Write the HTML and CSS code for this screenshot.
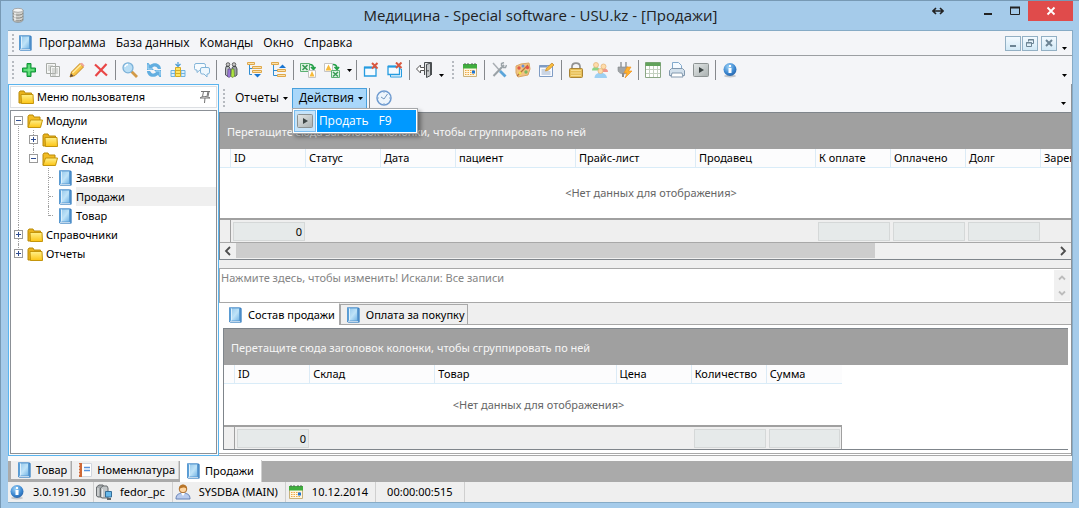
FILE: index.html
```html
<!DOCTYPE html>
<html lang="ru">
<head>
<meta charset="utf-8">
<title>Медицина - Special software - USU.kz - [Продажи]</title>
<link rel="stylesheet" href="styles.css">
</head>
<body>
<svg class="defs" aria-hidden="true">
  <defs>
    <linearGradient id="g-blue" x1="0" y1="0" x2="1" y2="1"><stop offset="0" stop-color="#8fc4ea"/><stop offset=".55" stop-color="#bfe3f8"/><stop offset="1" stop-color="#6fb2e4"/></linearGradient>
    <linearGradient id="g-yellow" x1="0" y1="0" x2="0" y2="1"><stop offset="0" stop-color="#fff08a"/><stop offset="1" stop-color="#fcc414"/></linearGradient>
    <linearGradient id="g-grey" x1="0" y1="0" x2="1" y2="1"><stop offset="0" stop-color="#e4e8e8"/><stop offset="1" stop-color="#a9b0b0"/></linearGradient>
    <radialGradient id="g-ball" cx=".4" cy=".3" r=".8"><stop offset="0" stop-color="#9ed4f8"/><stop offset=".6" stop-color="#3a86d0"/><stop offset="1" stop-color="#245a9c"/></radialGradient>
  </defs>
  <symbol id="db" viewBox="0 0 16 16"><path d="M3 3v10c0 3 10 3 10 0V3z" fill="#d4d4d0" stroke="#858580" stroke-width=".8"/><ellipse cx="8" cy="3.3" rx="5" ry="2" fill="#f6f6f4" stroke="#999"  stroke-width=".8"/><path d="M3 6.2c1 2.5 9 2.5 10 0M3 9.2c1 2.5 9 2.5 10 0M3 12c1 2.5 9 2.5 10 0" fill="none" stroke="#84847f"/><path d="M5 6v8" stroke="#fff"/></symbol>
  <symbol id="book" viewBox="0 0 16 16"><path d="M2 .500h11.500l1 1v14H3l-1-1z" fill="#3a7ebf"/><path d="M2.500 1h10v13h-10z" fill="url(#g-blue)" stroke="#5a9bd2"/><path d="M3.500 1.500v12" stroke="#5b9fd8"/><path d="M4.500 1.500v12" stroke="#def1fd"/><path d="M3.500 15h10.500V2" fill="none" stroke="#5f9bd0"/><path d="M3 14.500h10" stroke="#dceaf5" stroke-width=".8"/></symbol>
  <symbol id="folder" viewBox="0 0 16 16"><path d="M1 3.500L2 2h4l1 2h6.500v10H1z" fill="#e9b21c" stroke="#b98a08"/><path d="M3.500 14.500l-.500-9h12l.500 9z" fill="url(#g-yellow)" stroke="#c4950c"/></symbol>
  <symbol id="folder-open" viewBox="0 0 16 16"><path d="M1 3.500L2 2h4l1 2h6v10H1z" fill="#f3bd25" stroke="#b98a08"/><path d="M1 14.500L3.500 7H15.500L13.500 14.500z" fill="url(#g-yellow)" stroke="#c4950c"/></symbol>
  <symbol id="pin" viewBox="0 0 12 14"><path d="M2 1.500h9M4.500 1.500l-1 5M9 1.500l-1 5M10 1.500l-1 5M1 8c2-2 7-2 10 0zM6 8l-.500 5" fill="none" stroke="#747474"/></symbol>
  <symbol id="add" viewBox="0 0 16 16"><path d="M6 1.500h4V6h4.500v4H10v4.500H6V10H1.500V6H6z" fill="#39c85a" stroke="#129238"/><path d="M8 3v10M3 8h10" stroke="#89ee98"/></symbol>
  <symbol id="copy" viewBox="0 0 16 16"><path d="M1.500 1.500h9v10h-9zM5.500 4.500h9v10h-9z" fill="#f5f6f5" stroke="#a7aba6"/><path d="M3 4h5M3 6h2M3 8h2M7 7h6M7 9h6M7 11h6M7 13h4" stroke="#b6bab5"/></symbol>
  <symbol id="pencil" viewBox="0 0 16 16"><path d="M1 15l1.500-5L11 1.500 14.500 5 6 13.500z" fill="#f8c446" stroke="#c58a22"/><path d="M3.500 11L12 2.800" stroke="#ffeaa0" stroke-width="1.500"/><path d="M11 1.500L14.500 5l1-1.500-2.500-2.800z" fill="#f0a399"/><path d="M1 15l1-3.500 2.500 2.500z" fill="#604b3e"/></symbol>
  <symbol id="delete" viewBox="0 0 16 16"><path d="M2 2.500l12 11M13.500 2L2.500 14" stroke="#e94646" stroke-width="2.200"/></symbol>
  <symbol id="search" viewBox="0 0 16 16"><path d="M9.500 9.500l5.500 5.500" stroke="#d29a48" stroke-width="2.800"/><circle cx="6" cy="5.800" r="5" fill="#b9def5" stroke="#7bb1d8" stroke-width="1.300"/><path d="M3 5c0-2 2-2.500 3-2.500" stroke="#fff" fill="none" stroke-width="1.300"/></symbol>
  <symbol id="refresh" viewBox="0 0 16 16"><path d="M1 1v7h7L6 6c1-1.500 3-2 4.500-1L12 7h3C15 2 9-1 4 3L2.500 1z" fill="#62aee0"/><path d="M15 15V8H8l2 2c-1 1.500-3 2-4.500 1L4 9H1c0 5 6 8 11 4l1.500 2z" fill="#62aee0"/><path d="M2 2.500V7h4M14 13.500V9h-4" fill="none" stroke="#a9d8f5"/></symbol>
  <symbol id="sort" viewBox="0 0 16 16"><path d="M1 8.500h4v6H1zM11 8.500h4v6h-4z" fill="#dceffb" stroke="#6eb3e0"/><path d="M1 11.500h14" stroke="#6eb3e0"/><path d="M5.500 5.500h5v9h-5z" fill="#ffe562" stroke="#d6ab25"/><path d="M6 8.500h4M6 11.500h4" stroke="#d6ab25"/><path d="M8 0v4M5.500 2L8 4.500 10.500 2" fill="none" stroke="#489bd5" stroke-width="1.200"/></symbol>
  <symbol id="chat" viewBox="0 0 16 16"><path d="M2 1.500h8q1.500 0 1.500 2v3q0 1.500-1.500 1.500H6L3 10.500V8H2Q.500 8 .500 6.500v-3q0-2 1.500-2z" fill="#f7fbfe" stroke="#82b4d8"/><path d="M8 5.500h6q1.500 0 1.500 1.500v3q0 2-1.500 2h-1v3l-3-3H8q-1.500 0-1.500-2V7q0-1.500 1.500-1.500z" fill="#eef7fd" stroke="#82b4d8"/></symbol>
  <symbol id="people" viewBox="0 0 16 16"><circle cx="5" cy="2.500" r="1.800" fill="#c9c9c9" stroke="#444" stroke-width=".8"/><circle cx="11" cy="2.500" r="1.800" fill="#c9c9c9" stroke="#444" stroke-width=".8"/><path d="M3 4.500h3l1 2v6L5 14.500 2.500 13V7z" fill="#b8bcc0" stroke="#34373a" stroke-width=".8"/><path d="M10 4.500h3l1 2.500v6l-2 1.500L9 12V6z" fill="#9a9ea2" stroke="#34373a" stroke-width=".8"/><path d="M5 7h2.500v7.500L6 15.500l-1.500-1z" fill="#9c78d8" stroke="#4c4070" stroke-width=".6"/><path d="M8.500 7H11l.500 7-1.500 1.500-2-1z" fill="#aee641" stroke="#55752a" stroke-width=".6"/></symbol>
  <symbol id="tree-down" viewBox="0 0 16 16"><path d="M2.500 3v9.500H5M2.500 6.500H6" fill="none" stroke="#318ed2"/><path d="M.500.500h7v2h-7zM5.500 4.500h9v2h-9zM5.500 8.500h9v2h-9z" fill="#fbe2ae" stroke="#dfa84b"/><path d="M7 12h7l-3.500 3.500z" fill="#1976d2"/></symbol>
  <symbol id="tree-up" viewBox="0 0 16 16"><path d="M2.500 3v10.500H6M2.500 8.500H6" fill="none" stroke="#318ed2"/><path d="M.500.500h7v2h-7zM6.500 7.500h8v2h-8zM6.500 12.500h8v2h-8z" fill="#fbe2ae" stroke="#dfa84b"/><path d="M8 6h7l-3.500-3.500z" fill="#1976d2"/></symbol>
  <symbol id="xls-out" viewBox="0 0 16 16"><path d="M.500 1.500h9v8h-9z" fill="#e0f3e4" stroke="#5bb072"/><path d="M2.500 3l5 5M7.500 3l-5 5" stroke="#3a9a55" stroke-width="1.600"/><path d="M10 2.500c3 0 3.500 2 3.500 4M11 5l2.500 2.500L15.500 5" fill="none" stroke="#23a048" stroke-width="1.700"/><path d="M8.500 8.500h7v7h-7z" fill="#fff" stroke="#c4c4c4"/><path d="M9.500 14.500l2.500-5.500 2.500 5.500z" fill="#f7bb3b"/></symbol>
  <symbol id="xls-in" viewBox="0 0 16 16"><path d="M.500 1.500h8v8h-8z" fill="#fff" stroke="#c4c4c4"/><path d="M1.500 8.500l3-6 3 6z" fill="#f7bb3b"/><path d="M9 2.500c3 0 4 2 4 4M10.500 5l2.500 2.500L15 5" fill="none" stroke="#23a048" stroke-width="1.700"/><path d="M7.500 8.500h8v7h-8z" fill="#e0f3e4" stroke="#5bb072"/><path d="M9 10l5 4.500M14 10l-5 4.500" stroke="#3a9a55" stroke-width="1.500"/></symbol>
  <symbol id="win-close" viewBox="0 0 16 16"><path d="M1.500 5.500h11.500v8.500H1.500z" fill="#f6fbff" stroke="#269ce0" stroke-width="1.300"/><path d="M1 5.500h8" stroke="#269ce0" stroke-width="2"/><path d="M9 1l5.500 5.500M14.500 1L9 6.500" stroke="#d9573f" stroke-width="2"/></symbol>
  <symbol id="wins-close" viewBox="0 0 16 16"><path d="M3.500 7h11v8h-11z" fill="#f6fbff" stroke="#269ce0"/><path d="M1 4.500h11.500v8H1z" fill="#f6fbff" stroke="#269ce0" stroke-width="1.300"/><path d="M1 4.500h8" stroke="#269ce0" stroke-width="2"/><path d="M9 .500L14.500 6M14.500.500L9 6" stroke="#d9573f" stroke-width="2"/></symbol>
  <symbol id="exit" viewBox="0 0 16 16"><path d="M8.500 13V.500h7V13" fill="#e3e4e5" stroke="#4b4f52"/><path d="M10.500 2.500l4-1.500v12.500l-4 2z" fill="#c3c6c8" stroke="#4b4f52"/><path d="M.500 7L4.500 3v2.500h4v3h-4V11z" fill="#fff" stroke="#555"/><path d="M12 8v1.500" stroke="#222"/></symbol>
  <symbol id="calendar" viewBox="0 0 16 16"><path d="M1.500 2.500h13v12h-13z" fill="#fff6df" stroke="#c9b27c"/><path d="M1 2h14v4.500H1z" fill="#3fae3d"/><path d="M3 1v2M6 1v2M10 1v2M13 1v2" stroke="#4f6655"/><path d="M3 8.500h10M3 10.500h10M3 12.500h10" stroke="#eda947" stroke-dasharray="1.500 1"/><path d="M10 8.500h3v3h-3z" fill="#1d74d3"/></symbol>
  <symbol id="tools" viewBox="0 0 16 16"><path d="M2 1l8 9" stroke="#a9aeb3" stroke-width="1.500"/><path d="M9 9l5.500 5.500" stroke="#5ba5da" stroke-width="2.800"/><path d="M13 3L2.500 14" stroke="#9aa2a7" stroke-width="2"/><path d="M10.500 4V1.500L13 .500M12 5.500h2.500L15.500 3" fill="none" stroke="#9aa2a7" stroke-width="1.400"/></symbol>
  <symbol id="palette" viewBox="0 0 16 16"><path d="M1 4l5-2 8-1 1 6-2 6-10 2-2-4z" fill="#f2c284" stroke="#dba765"/><path d="M2 14L13 3" stroke="#b8763a" stroke-width="1.300"/><circle cx="4" cy="6" r="1.700" fill="#e05c48"/><circle cx="8" cy="4" r="1.500" fill="#6c90d2"/><circle cx="12.500" cy="5.500" r="1.700" fill="#e4534a"/><circle cx="11" cy="10" r="1.700" fill="#7ab861"/><circle cx="5" cy="11" r="1.500" fill="#eee14b"/></symbol>
  <symbol id="edit" viewBox="0 0 16 16"><path d="M.500 3.500h13v11H.500z" fill="#f8faff" stroke="#7f9cc4"/><path d="M.500 4.500h8" stroke="#7f9cc4" stroke-width="2"/><path d="M2.500 8h4M2.500 10h9M2.500 12h9" stroke="#9db1cc"/><path d="M6.500 9l1-3L13 1l2 2-5.500 5z" fill="#f9bd3e" stroke="#c48c35" stroke-width=".8"/></symbol>
  <symbol id="lock" viewBox="0 0 16 16"><path d="M4 7V4.500c0-4.500 8-4.500 8 0V7" fill="none" stroke="#929292" stroke-width="1.700"/><rect x="1.500" y="6.500" width="13" height="9" rx="1" fill="#e7bf59" stroke="#aa8436"/><path d="M3 8.500h10M3 11h10M3 13.500h10" stroke="#f6dc91"/></symbol>
  <symbol id="users" viewBox="0 0 16 16"><path d="M0 8.500c0-5 7.500-5 7.500 0z" fill="#8fd487"/><circle cx="4" cy="3" r="2.500" fill="#ffdcaa" stroke="#e5b87c" stroke-width=".8"/><path d="M8 10c0-5 8-5 8 0z" fill="#f0968c"/><circle cx="11.500" cy="4.500" r="2.500" fill="#ffdcaa" stroke="#e5b87c" stroke-width=".8"/><path d="M2.500 16c0-7 12-7 12.500 0z" fill="#9dd0f3"/><circle cx="8.500" cy="9" r="2.500" fill="#ffdcaa" stroke="#e5b87c" stroke-width=".8"/></symbol>
  <symbol id="plug" viewBox="0 0 16 16"><path d="M5 0v5M10 0v5" stroke="#9b9fa2" stroke-width="1.600"/><path d="M2 5h10v3c0 3-2 4-4 4s-6-1-6-4z" fill="#a0a4a7" stroke="#84888b" stroke-width=".6"/><path d="M7 11v4" stroke="#8b8b8b" stroke-width="2"/><path d="M11 5l4 0-2.500 4H16l-7 7 2-5H8z" fill="#ffb22e" stroke="#ee8b12" stroke-width=".6"/></symbol>
  <symbol id="table" viewBox="0 0 16 16"><path d="M.500.500h15v15H.500z" fill="#fff" stroke="#8aa684"/><path d="M.500.500h15V4H.500z" fill="#62a35c"/><path d="M1 7.500h14M1 11.500h14M4.500 4v11M8.500 4v11M12.500 4v11" stroke="#c3d0c0"/></symbol>
  <symbol id="printer" viewBox="0 0 16 16"><path d="M3.500 8V.500h6l3 3V8z" fill="#f5faff" stroke="#82a9cc"/><path d="M.500 8.500l2-2h11l2 2v5H.500z" fill="#d2e0ec" stroke="#8298ae"/><path d="M3 11h10l1 4H2z" fill="#fff" stroke="#8399ae"/></symbol>
  <symbol id="play" viewBox="0 0 16 16"><rect x=".5" y="1.500" width="15" height="13" rx="1" fill="url(#g-grey)" stroke="#8c9292"/><path d="M6 5v6l5-3z" fill="#3e4646"/></symbol>
  <symbol id="info" viewBox="0 0 16 16"><ellipse cx="8" cy="14" rx="6" ry="1.500" fill="#c4c8cc"/><circle cx="8" cy="7.500" r="6.500" fill="url(#g-ball)"/><path d="M7 3h2v2H7zM6.500 6H9.500v5h-3z" fill="#fff"/></symbol>
  <symbol id="clock" viewBox="0 0 16 16"><circle cx="8" cy="8" r="7" fill="#edf5fc" stroke="#6f9bd0" stroke-width="1.500"/><path d="M5 7l3 2 3.500-5" fill="none" stroke="#7196bd"/><path d="M8 2v1M8 13v1M2 8h1M13 8h1" stroke="#88aaca"/></symbol>
  <symbol id="note" viewBox="0 0 16 16"><path d="M2.500 1.500h12v13h-12z" fill="#fff" stroke="#d1d6de"/><path d="M2 1h3v14H2z" fill="#ce6937"/><path d="M1 3h2M1 6h2M1 9h2M1 12h2" stroke="#fff"/><path d="M7 5.500h6M7 8.500h6" stroke="#5994dc" stroke-width="1.600"/></symbol>
  <symbol id="server" viewBox="0 0 16 16"><path d="M.500 3L3 1h4l1 2v10H2l-1.500-1z" fill="#a4a9ab" stroke="#686c6f"/><path d="M4.500 4L7 2h4l1 2v10H6l-1.500-1z" fill="#c2c6c8" stroke="#686c6f"/><path d="M2 4v8M6.500 5v8" stroke="#eee"/><path d="M9.500 7.500h6V13h-6z" fill="#68b9ea" stroke="#356e98"/><path d="M11 15h4" stroke="#62686b" stroke-width="2"/></symbol>
  <symbol id="person" viewBox="0 0 16 16"><path d="M1 15c0-5 3-5 5-6h4c2 1 5 1 5 6z" fill="#b9cbed" stroke="#6581b5"/><circle cx="8" cy="5" r="3.800" fill="#ffd6a2" stroke="#a86a2b"/><path d="M4 5c0-6 8-6 8 0-2-2-5-2-8 0z" fill="#b87529"/><path d="M6 9l2 3 2-3z" fill="#fff"/></symbol>
  <symbol id="left" viewBox="0 0 8 10"><path d="M6 1L2 5l4 4" fill="none" stroke="#4d4d4d" stroke-width="1.800"/></symbol>
  <symbol id="right" viewBox="0 0 8 10"><path d="M2 1l4 4-4 4" fill="none" stroke="#4d4d4d" stroke-width="1.800"/></symbol>
  <symbol id="up" viewBox="0 0 10 8"><path d="M2 5.500l3-3 3 3" fill="none" stroke="#bcbcbc" stroke-width="1.800"/></symbol>
  <symbol id="down" viewBox="0 0 10 8"><path d="M2 2.500l3 3 3-3" fill="none" stroke="#bcbcbc" stroke-width="1.800"/></symbol>
  <symbol id="caret" viewBox="0 0 5 3"><path d="M0 0h5L2.500 3z" fill="#000"/></symbol>
  <symbol id="resize" viewBox="0 0 12 8"><path d="M1 4h10M4 1L1 4l3 3M8 1l3 3-3 3" fill="none" stroke="#222" stroke-width="1.600"/></symbol>
  <symbol id="w-min" viewBox="0 0 10 10"><path d="M1 8h8" stroke="#222" stroke-width="2"/></symbol>
  <symbol id="w-max" viewBox="0 0 10 10"><path d="M.500 1.500h9v7h-9z" fill="none" stroke="#222"/><path d="M0 1.500h10" stroke="#222" stroke-width="2"/></symbol>
  <symbol id="w-close" viewBox="0 0 10 10"><path d="M1.500 1.500l7 7M8.500 1.500l-7 7" stroke="#fff" stroke-width="1.800"/></symbol>
  <symbol id="m-min" viewBox="0 0 10 10"><path d="M2 8h6" stroke="#6c8494" stroke-width="2"/></symbol>
  <symbol id="m-restore" viewBox="0 0 10 10"><path d="M3.500 3.500v-2h5v4h-2M1.500 4.500h5v4h-5zM1 5h6M3 2h6" fill="none" stroke="#6c8494"/></symbol>
  <symbol id="m-close" viewBox="0 0 10 10"><path d="M2 2l6 6M8 2L2 8" stroke="#6c8494" stroke-width="2"/></symbol>
</svg>

<div class="window">
  <header class="titlebar">
    <svg class="icon app-icon"><use href="#db"/></svg>
    <h1 class="title">Медицина - Special software - USU.kz - [Продажи]</h1>
    <div class="window-buttons">
      <button class="wb wb-resize" aria-label="Размер"><svg><use href="#resize"/></svg></button>
      <button class="wb" aria-label="Свернуть"><svg><use href="#w-min"/></svg></button>
      <button class="wb" aria-label="Развернуть"><svg><use href="#w-max"/></svg></button>
      <button class="wb wb-close" aria-label="Закрыть"><svg><use href="#w-close"/></svg></button>
    </div>
  </header>

  <div class="frame">
    <nav class="menubar">
      <span class="grip"></span>
      <svg class="icon menu-icon"><use href="#book"/></svg>
      <button class="menu">Программа</button><button class="menu">База данных</button><button class="menu">Команды</button><button class="menu">Окно</button><button class="menu">Справка</button>
      <div class="mdi">
        <button aria-label="Свернуть окно"><svg><use href="#m-min"/></svg></button>
        <button aria-label="Восстановить окно"><svg><use href="#m-restore"/></svg></button>
        <button class="mdi-close" aria-label="Закрыть окно"><svg><use href="#m-close"/></svg></button>
      </div>
      <button class="more" aria-label="Ещё"><svg><use href="#caret"/></svg></button>
    </nav>

    <div class="toolbar">
      <span class="grip"></span>
      <button class="tool" aria-label="Добавить"><svg class="icon"><use href="#add"/></svg></button>
      <button class="tool" aria-label="Копировать"><svg class="icon"><use href="#copy"/></svg></button>
      <button class="tool" aria-label="Изменить"><svg class="icon"><use href="#pencil"/></svg></button>
      <button class="tool" aria-label="Удалить"><svg class="icon"><use href="#delete"/></svg></button>
      <span class="sep"></span>
      <button class="tool" aria-label="Поиск"><svg class="icon"><use href="#search"/></svg></button>
      <button class="tool" aria-label="Обновить"><svg class="icon"><use href="#refresh"/></svg></button>
      <button class="tool" aria-label="Ширина колонок"><svg class="icon"><use href="#sort"/></svg></button>
      <button class="tool" aria-label="Примечания"><svg class="icon"><use href="#chat"/></svg></button>
      <span class="sep"></span>
      <button class="tool" aria-label="Группы"><svg class="icon"><use href="#people"/></svg></button>
      <button class="tool" aria-label="Развернуть все"><svg class="icon"><use href="#tree-down"/></svg></button>
      <button class="tool" aria-label="Свернуть все"><svg class="icon"><use href="#tree-up"/></svg></button>
      <span class="sep"></span>
      <button class="tool" aria-label="Экспорт"><svg class="icon"><use href="#xls-out"/></svg></button>
      <button class="tool" aria-label="Импорт"><svg class="icon"><use href="#xls-in"/></svg></button>
      <button class="drop" aria-label="Варианты импорта"><svg><use href="#caret"/></svg></button>
      <span class="sep"></span>
      <button class="tool" aria-label="Закрыть окно"><svg class="icon"><use href="#win-close"/></svg></button>
      <button class="tool" aria-label="Закрыть все окна"><svg class="icon"><use href="#wins-close"/></svg></button>
      <span class="sep"></span>
      <button class="tool" aria-label="Выход"><svg class="icon"><use href="#exit"/></svg></button>
      <button class="drop drop-low" aria-label="Ещё кнопки"><svg><use href="#caret"/></svg></button>
      <span class="grip grip-mid"></span>
      <button class="tool" aria-label="Календарь"><svg class="icon"><use href="#calendar"/></svg></button>
      <span class="sep"></span>
      <button class="tool" aria-label="Настройки"><svg class="icon"><use href="#tools"/></svg></button>
      <button class="tool" aria-label="Оформление"><svg class="icon"><use href="#palette"/></svg></button>
      <button class="tool" aria-label="Правка"><svg class="icon"><use href="#edit"/></svg></button>
      <span class="sep"></span>
      <button class="tool" aria-label="Блокировка"><svg class="icon"><use href="#lock"/></svg></button>
      <button class="tool" aria-label="Пользователи"><svg class="icon"><use href="#users"/></svg></button>
      <button class="tool" aria-label="Подключение"><svg class="icon"><use href="#plug"/></svg></button>
      <span class="sep"></span>
      <button class="tool" aria-label="Таблица"><svg class="icon"><use href="#table"/></svg></button>
      <button class="tool" aria-label="Печать"><svg class="icon"><use href="#printer"/></svg></button>
      <button class="tool" aria-label="Выполнить"><svg class="icon"><use href="#play"/></svg></button>
      <span class="sep"></span>
      <button class="tool" aria-label="Информация"><svg class="icon"><use href="#info"/></svg></button>
      <button class="more" aria-label="Ещё"><svg><use href="#caret"/></svg></button>
    </div>

    <div class="workspace">
      <aside class="sidebar">
        <div class="side-head">
          <svg class="icon"><use href="#folder"/></svg>
          <span>Меню пользователя</span>
          <button class="pin" aria-label="Закрепить"><svg><use href="#pin"/></svg></button>
        </div>
        <ul class="tree">
          <li>
            <div class="node"><span class="box minus"></span><svg class="icon"><use href="#folder-open"/></svg><span class="label">Модули</span></div>
            <ul>
              <li><div class="node"><span class="box plus"></span><svg class="icon"><use href="#folder"/></svg><span class="label">Клиенты</span></div></li>
              <li>
                <div class="node"><span class="box minus"></span><svg class="icon"><use href="#folder-open"/></svg><span class="label">Склад</span></div>
                <ul>
                  <li><div class="node"><span class="twig"></span><svg class="icon"><use href="#book"/></svg><span class="label">Заявки</span></div></li>
                  <li><div class="node"><span class="twig"></span><svg class="icon"><use href="#book"/></svg><span class="label selected">Продажи</span></div></li>
                  <li><div class="node"><span class="twig"></span><svg class="icon"><use href="#book"/></svg><span class="label">Товар</span></div></li>
                </ul>
              </li>
            </ul>
          </li>
          <li><div class="node"><span class="box plus"></span><svg class="icon"><use href="#folder"/></svg><span class="label">Справочники</span></div></li>
          <li><div class="node"><span class="box plus"></span><svg class="icon"><use href="#folder"/></svg><span class="label">Отчеты</span></div></li>
        </ul>
      </aside>

      <main class="content">
        <div class="actions">
          <span class="grip"></span>
          <button class="action">Отчеты<svg class="caret"><use href="#caret"/></svg></button>
          <div class="action-wrap">
            <button class="action open">Действия<svg class="caret"><use href="#caret"/></svg></button>
            <div class="popup">
              <span class="popup-icon"><svg class="icon"><use href="#play"/></svg></span>
              <button class="popup-item"><span>Продать</span><span>F9</span></button>
            </div>
          </div>
          <span class="sep"></span>
          <button class="tool" aria-label="Время"><svg class="icon"><use href="#clock"/></svg></button>
          <button class="more" aria-label="Ещё"><svg><use href="#caret"/></svg></button>
        </div>

        <section class="grid">
          <div class="group-hint">Перетащите сюда заголовок колонки, чтобы сгруппировать по ней</div>
          <div class="clip">
            <table class="sales">
              <colgroup><col class="c-mark"><col class="c-s"><col class="c-s"><col class="c-s"><col class="c-m"><col class="c-m"><col class="c-m"><col class="c-s"><col class="c-s"><col class="c-s"><col></colgroup>
              <thead><tr><th></th><th>ID</th><th>Статус</th><th>Дата</th><th>пациент</th><th>Прайс-лист</th><th>Продавец</th><th>К оплате</th><th>Оплачено</th><th>Долг</th><th>Зарег</th></tr></thead>
              <tbody><tr><td></td><td class="empty" colspan="10">&lt;Нет данных для отображения&gt;</td></tr></tbody>
              <tfoot><tr><td class="mark"></td><td><output>0</output></td><td colspan="5"></td><td><output></output></td><td><output></output></td><td><output></output></td><td></td></tr></tfoot>
            </table>
          </div>
          <div class="hscroll">
            <button aria-label="Влево"><svg><use href="#left"/></svg></button>
            <div class="track"><div class="thumb"></div></div>
            <button aria-label="Вправо"><svg><use href="#right"/></svg></button>
          </div>
        </section>

        <div class="memo">
          <textarea aria-label="Условия поиска" rows="1">Нажмите здесь, чтобы изменить! Искали: Все записи</textarea>
          <div class="vscroll">
            <button aria-label="Вверх"><svg><use href="#up"/></svg></button>
            <button aria-label="Вниз"><svg><use href="#down"/></svg></button>
          </div>
        </div>

        <div class="tabs">
          <button class="tab active"><svg class="icon"><use href="#book"/></svg>Состав продажи</button>
          <button class="tab"><svg class="icon"><use href="#book"/></svg>Оплата за покупку</button>
        </div>
        <div class="tab-page">
          <section class="grid detail">
            <div class="group-hint">Перетащите сюда заголовок колонки, чтобы сгруппировать по ней</div>
            <div class="clip">
              <table class="items">
                <colgroup><col class="c-mark"><col class="c-s"><col class="c-w"><col class="c-x"><col class="c-s"><col class="c-s"><col class="c-s"></colgroup>
                <thead><tr><th></th><th>ID</th><th>Склад</th><th>Товар</th><th>Цена</th><th>Количество</th><th>Сумма</th></tr></thead>
                <tbody><tr><td></td><td class="empty" colspan="6">&lt;Нет данных для отображения&gt;</td></tr></tbody>
                <tfoot><tr><td class="mark"></td><td><output>0</output></td><td colspan="3"></td><td><output></output></td><td><output></output></td></tr></tfoot>
              </table>
            </div>
          </section>
        </div>
      </main>
    </div>

    <div class="doc-tabs">
      <button class="doc"><svg class="icon"><use href="#book"/></svg>Товар</button>
      <button class="doc"><svg class="icon"><use href="#note"/></svg>Номенклатура</button>
      <button class="doc current"><svg class="icon"><use href="#book"/></svg>Продажи</button>
    </div>

    <footer class="status">
      <span class="cell"><svg class="icon"><use href="#info"/></svg>3.0.191.30</span>
      <span class="cell"><svg class="icon"><use href="#server"/></svg>fedor_pc</span>
      <span class="cell"><svg class="icon"><use href="#person"/></svg>SYSDBA (MAIN)</span>
      <span class="cell"><svg class="icon"><use href="#calendar"/></svg>10.12.2014</span>
      <span class="cell timer">00:00:00:515</span>
    </footer>
  </div>
</div>
</body>
</html>
```
FILE: styles.css
```css
* { box-sizing: border-box; }
body {
  margin: 0;
  background: #a5cbea;
  color: #000;
  font: 11px/14px "Noto Sans", "Open Sans", sans-serif;
}
button { margin: 0; padding: 0; border: 0; background: none; color: inherit; font: inherit; display: flex; align-items: center; justify-content: center; white-space: nowrap; }
ul { list-style: none; margin: 0; padding: 0; }
.defs { position: absolute; width: 0; height: 0; }
.icon { width: 16px; height: 16px; flex: none; }

.window { min-height: 100vh; display: flex; flex-direction: column; padding: 0 6px 5px 7px; border-top: 1px solid #7799b4; border-left: 1px solid #7799b4; background: #a5cbea; }

.titlebar { display: grid; grid-template-columns: 1fr auto 1fr; height: 29px; flex: none; }
.app-icon { margin: 6px 0 0 2px; }
.title { margin: 0; font: 15px/29px "Open Sans", "Noto Sans", sans-serif; color: #222; }
.window-buttons { display: flex; justify-content: flex-end; height: 20px; }
.wb { width: 27px; }
.wb svg { width: 10px; height: 10px; }
.wb-resize { margin-right: 23px; }
.wb-resize svg { width: 12px; height: 8px; }
.wb-close { width: 45px; background: #e04b4b; }

.frame { flex: 1; display: flex; flex-direction: column; border: 1px solid #86abc6; border-left: 0; background: #f4f5f8; }

.menubar { display: flex; align-items: center; height: 25px; flex: none; border-bottom: 1px solid #9b9fa3; font: 12px/16px "Open Sans", "Noto Sans", sans-serif; }
.grip { width: 2px; height: 18px; margin: 0 3px 0 4px; background: repeating-linear-gradient(#b6bac0 0 2px, transparent 2px 4px); flex: none; }
.menu-icon { margin-right: 1px; }
.menu { padding: 0 5px; height: 22px; }
.mdi { display: flex; gap: 1px; margin-left: auto; }
.mdi button { width: 16px; height: 15px; border: 1px solid #93b0c4; background: linear-gradient(#f3faff, #d2e9f6); }
.mdi svg { width: 10px; height: 10px; }
.mdi .mdi-close { margin-left: 2px; }
.more { width: 15px; height: 20px; align-items: flex-end; padding-bottom: 3px; }
.more svg, .drop svg, .caret { width: 5px; height: 3px; flex: none; }

.toolbar { display: flex; align-items: center; height: 28px; flex: none; }
.toolbar .more, .actions .more { margin-left: auto; }
.tool { width: 24px; height: 24px; flex: none; }
.sep { width: 1px; height: 20px; margin: 0 2px; background: #85888c; flex: none; }
.drop { width: 10px; height: 20px; }
.drop-low { align-items: flex-end; padding-bottom: 3px; }
.grip-mid { margin: 0 4px 0 6px; }

.workspace { flex: 1; display: flex; background: #efefef; }
.sidebar { width: 211px; flex: none; display: flex; flex-direction: column; gap: 2px; border: 1px solid #5ab4ee; padding: 1px; background: #fafbfc; }
.side-head { display: flex; align-items: center; gap: 3px; height: 22px; padding: 0 5px 0 7px; border: 1px solid #dcdfe3; background: #fff; }
.pin { margin-left: auto; }
.pin svg { width: 12px; height: 14px; }
.tree { flex: 1; background: #fff; border: 1px solid #8b9096; padding-left: 3px; }
.node { display: flex; align-items: center; height: 19px; }
.node .icon { margin-left: 4px; }
.label { flex: 1; line-height: 19px; margin-left: 3px; }
.selected { background: #efefef; }
.tree ul { padding-left: 15px; }
.tree li { position: relative; }
.box { width: 9px; height: 9px; border: 1px solid #9a9a9a; background: linear-gradient(#2f4d91, #2f4d91) center / 5px 1px no-repeat #fff; flex: none; z-index: 1; }
.plus { background: linear-gradient(#2f4d91, #2f4d91) center / 5px 1px no-repeat, linear-gradient(#2f4d91, #2f4d91) center / 1px 5px no-repeat, #fff; }
.tree li::before { content: ""; position: absolute; left: 4px; top: 0; bottom: 0; border-left: 1px dotted #a0a0a0; }
.tree > li:first-child::before { top: 10px; }
.tree li:last-child::before { bottom: auto; height: 10px; }
.twig { width: 9px; flex: none; }
.twig::after { content: ""; display: block; margin-left: 5px; border-top: 1px dotted #a0a0a0; }

.content { flex: 1; min-width: 0; display: flex; flex-direction: column; border-right: 1px solid #8d9298; }
.actions { display: flex; align-items: center; height: 28px; flex: none; background: #f4f5f8; font: 12px/16px "Open Sans", "Noto Sans", sans-serif; }
.action { height: 21px; padding: 0 3px 0 6px; gap: 4px; border: 1px solid transparent; }
.open { background: #a9d7fa; border-color: #48a0dc; }
.action-wrap { position: relative; }
.popup { position: absolute; z-index: 5; top: 20px; left: 0; width: 126px; height: 26px; display: flex; border: 1px solid #a5a8ab; background: #fff; padding: 1px; box-shadow: 3px 3px 4px rgba(0, 0, 0, .35); }
.popup-icon { width: 22px; background: #c6e4fa; border: 1px solid #79bdf0; display: flex; align-items: center; justify-content: center; }
.popup-item { flex: 1; margin-left: 1px; padding-left: 2px; gap: 10px; justify-content: flex-start; background: #0099ff; color: #fff; }

.grid { border: 1px solid #7f858b; border-right: 0; background: #fff; }
.group-hint { height: 36px; padding-left: 7px; line-height: 37px; background: #a0a0a0; color: #f6f6f6; white-space: nowrap; }
.clip { overflow: hidden; }
table { table-layout: fixed; border-collapse: separate; border-spacing: 0; }
.sales { width: 100%; min-width: 851px; }
.items { width: 618px; }
.c-mark { width: 11px; }
.c-s { width: 75px; }
.c-m { width: 120px; }
.c-w { width: 125px; }
.c-x { width: 181px; }
th, td { padding: 0; overflow: hidden; white-space: nowrap; }
th { height: 19px; padding-left: 3px; text-align: left; font-weight: normal; background: #fcfcfd; border-bottom: 1px solid #d9ecf8; border-right: 1px solid #dcebf6; }
th:last-child { border-right: 0; }
.empty { height: 50px; text-align: center; color: #666; }
.detail .empty { height: 41px; }
tfoot td { height: 24px; padding: 1px 1px 1px 2px; background: #efefef; border-top: 2px solid #a0a0a0; }
tfoot .mark { border-right: 1px solid #a0a0a0; }
.items tfoot td:last-child { border-right: 1px solid #a0a0a0; }
output { display: block; height: 19px; padding-right: 2px; line-height: 17px; text-align: right; background: #e6eaea; border: 1px solid #d5d8d8; }
.hscroll { display: flex; height: 17px; border-top: 1px solid #a8a8a8; background: #f0f0f0; }
.hscroll button { width: 16px; }
.hscroll svg { width: 8px; height: 10px; }
.track { flex: 1; }
.thumb { width: 78%; height: 15px; background: #cdcdcd; }

.memo { display: flex; height: 35px; flex: none; margin-top: 8px; border: 1px solid #a8a8a8; border-right: 0; background: #fff; }
.memo textarea { flex: 1; border: 0; padding: 2px 1px; margin: 0; resize: none; outline: 0; overflow: hidden; background: none; color: #858585; font: inherit; }
.vscroll { width: 16px; margin: 1px; display: flex; flex-direction: column; background: #f0f0f0; }
.vscroll button { flex: 1; }
.vscroll svg { width: 10px; height: 8px; }

.tabs { display: flex; align-items: flex-end; height: 22px; flex: none; border-bottom: 1px solid #a8a8a8; }
.tab { height: 20px; padding: 0 2px 0 4px; gap: 5px; border: 1px solid #a8a8a8; border-bottom: 0; background: #efefef; }
.tab.active { height: 22px; margin-bottom: -1px; padding: 0 4px 0 7px; background: #fff; border-color: transparent #a8a8a8 transparent transparent; }
.tab-page { flex: 1; padding: 3px 3px 2px 4px; background: #fff; border-bottom: 3px double #a8a8a8; }

.doc-tabs { display: flex; height: 26px; flex: none; padding-left: 3px; gap: 1px; background: linear-gradient(#fafafa 5px, #aaa 5px); align-items: flex-start; }
.doc { height: 18px; margin-top: 5px; padding: 0 3px 0 5px; gap: 4px; background: #efefef; border-right: 1px solid #cfcfcf; }
.doc.current { height: 22px; margin-top: 4px; padding: 0 7px 0 5px; background: #fff; }
.status { display: flex; height: 20px; flex: none; background: #efefef; }
.cell { display: flex; align-items: center; gap: 8px; padding: 0 7px 0 1px; border-right: 1px solid #cfcfcf; }
.cell + .cell { padding-left: 2px; }
.cell.timer { padding: 0 11px; }
```
